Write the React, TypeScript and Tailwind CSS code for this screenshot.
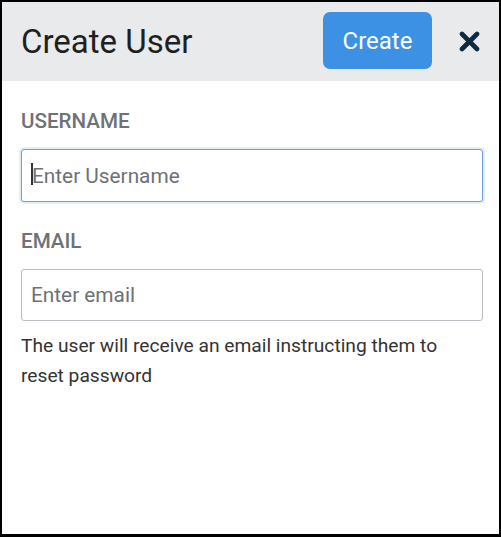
import React from "react";

export default function App() {
  return (
    <div
      className="w-[501px] h-[537px] border-2 border-b-[3px] border-black bg-white box-border flex flex-col"
      style={{ fontFamily: "Roboto, 'Liberation Sans', sans-serif" }}
    >
      <div className="h-[79px] shrink-0 bg-[#e9eaec] flex items-center pl-[19px] pr-[19px]">
        <h1 className="text-[33px] leading-none text-[#1f1f1f] font-normal flex-1 -mt-[1px]">Create User</h1>
        <button className="h-[57px] w-[109px] rounded-[7px] bg-[#3d91e4] text-white text-[24px] leading-none flex items-center justify-center -mt-[2px]">
          Create
        </button>
        <button className="ml-[27px] w-[21px] h-[21px] flex items-center justify-center -mt-[1px]" aria-label="close">
          <svg width="21" height="21" viewBox="0 0 21 21">
            <path d="M3 3 L18 18 M18 3 L3 18" stroke="#0c2b40" strokeWidth="4.6" strokeLinecap="round" fill="none" />
          </svg>
        </button>
      </div>
      <div className="pl-[19px] pr-[16px]">
        <div className="mt-[28px] text-[20.6px] leading-[24px] font-medium text-[#6e7277]">USERNAME</div>
        <div className="relative mt-[16px]">
          <input
            className="w-full h-[53px] rounded-[3px] border-[1.5px] border-[#68a1db] shadow-[0_0_0_2px_rgba(104,161,219,0.18)] pl-[10px] text-[20.8px] text-[#333] placeholder:text-[#6d7176] outline-none bg-white"
            placeholder="Enter Username"
          />
          <div className="absolute left-[10px] top-[14px] w-[2px] h-[22px] bg-[#333]" />
        </div>
        <div className="mt-[27px] text-[20.6px] leading-[24px] font-medium text-[#6e7277]">EMAIL</div>
        <div className="mt-[16px]">
          <input
            className="w-full h-[52px] rounded-[3px] border-[1.5px] border-[#b9bdc1] pl-[9px] text-[20.8px] text-[#333] placeholder:text-[#6d7176] outline-none bg-white"
            placeholder="Enter email"
          />
        </div>
        <p className="mt-[10px] text-[19.2px] leading-[30px] text-[#333] pr-[20px]">
          The user will receive an email instructing them to reset password
        </p>
      </div>
    </div>
  );
}
